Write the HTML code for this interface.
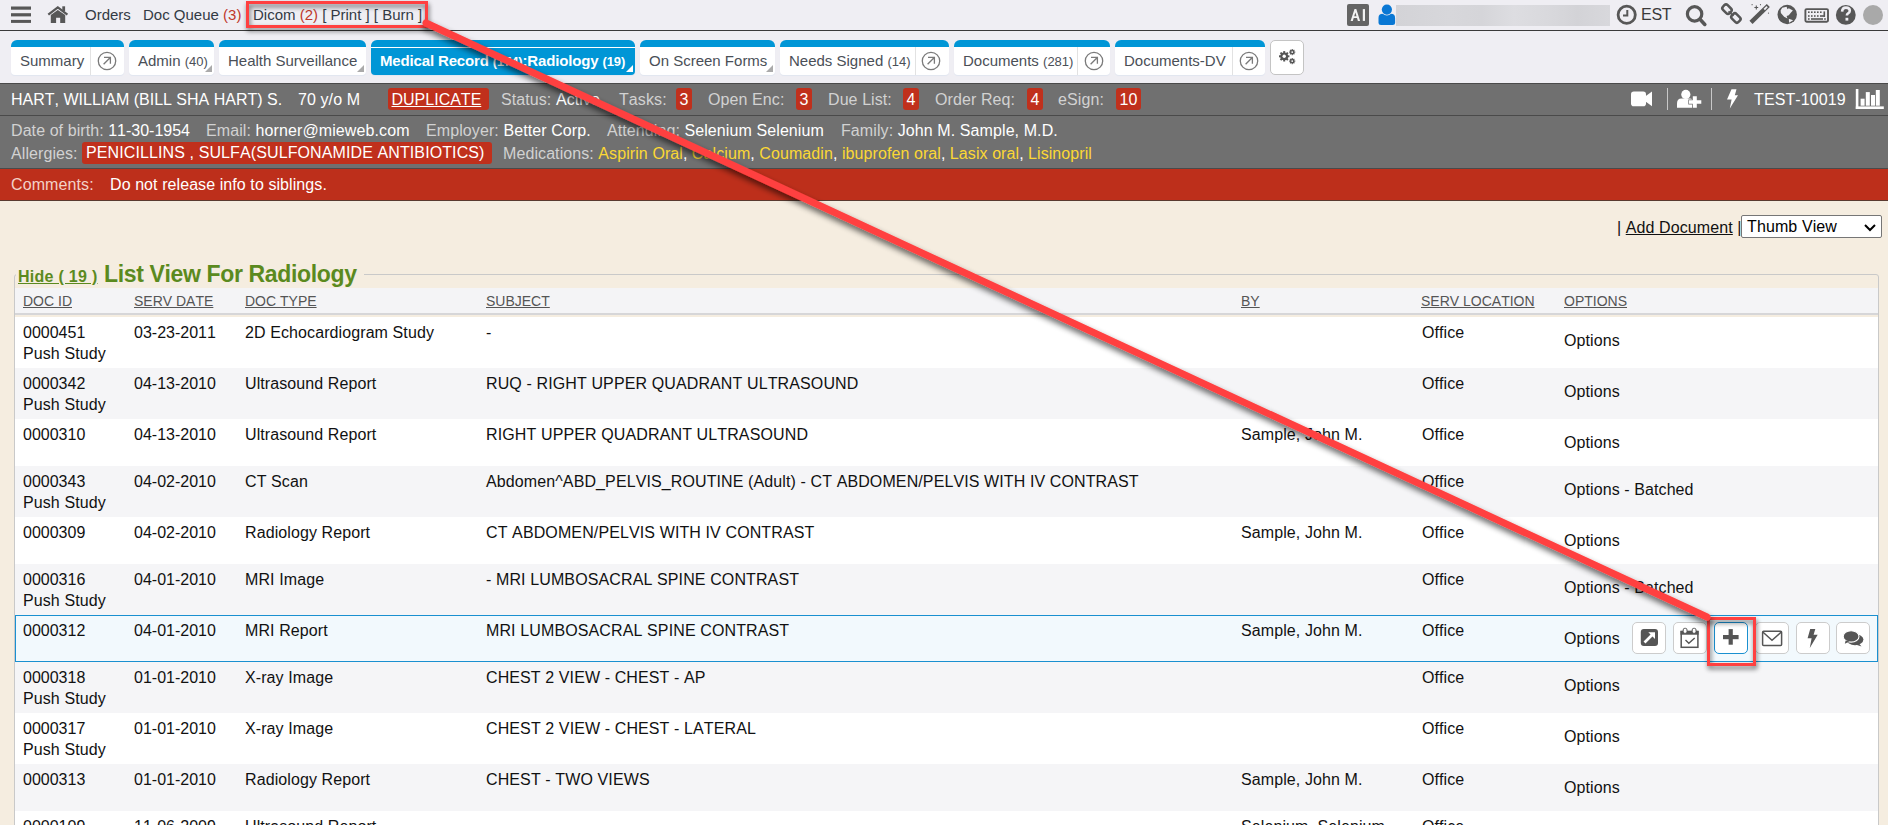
<!DOCTYPE html>
<html><head><meta charset="utf-8">
<style>
*{box-sizing:border-box;margin:0;padding:0}
html,body{width:1888px;height:825px;overflow:hidden;background:#f5ede0;font-family:"Liberation Sans",sans-serif;font-kerning:none}
.abs{position:absolute;white-space:nowrap}
#top{position:absolute;left:0;top:0;width:1888px;height:31px;background:#efeef3;border-bottom:1px solid #3a3a3a}
#tabs{position:absolute;left:0;top:31px;width:1888px;height:52px;background:#efeef3}
.t15{font-size:15px;color:#333a44}
.tab{position:absolute;top:40px;height:35px;background:#fff;border-radius:6px 6px 4px 4px;border-top:7px solid #0096d6;box-shadow:0 1px 1px rgba(0,120,200,0.06)}
.tab.act{background:#0096d6}
.tab .lbl{position:absolute;left:9px;top:5px;font-size:15px;color:#4a4f57;white-space:nowrap}
.tab.act .lbl{color:#fff;font-weight:bold}
.tab .cnt{font-size:13px}
.tab .div{position:absolute;top:0;bottom:0;width:1px;background:#e2e2e2}
.tab .circ{position:absolute;top:5px;width:18px;height:18px;border:1.5px solid #777;border-radius:50%}
.tri{position:absolute;right:2px;bottom:3px;width:0;height:0;border-left:7px solid transparent;border-bottom:7px solid #aaa}
#pbar{position:absolute;left:0;top:83px;width:1888px;height:33px;background:#707070;border-top:1px solid #4a4a4a;border-bottom:1px solid #4a4a4a}
#info{position:absolute;left:0;top:116px;width:1888px;height:53px;background:#707070;border-bottom:1px solid #4a4a4a}
#cmt{position:absolute;left:0;top:169px;width:1888px;height:32px;background:#bd2f1b;border-bottom:1px solid #5a3a30}
.w16{font-size:16px;color:#fff}
.lab{color:#d2d2d2}
.badge{position:absolute;background:#c0301c;border-radius:3px;color:#fff;font-size:16px;text-align:center}
.med{color:#fcd834}

.cell{position:absolute;font-size:16px;line-height:21px;color:#111;white-space:nowrap}
.row{position:absolute;left:15px;width:1863px}
.row.hl{background:#f2f9fd;border-top:1px solid #1a90d0;border-bottom:1px solid #1a90d0;border-left:1px solid #1a90d0;border-right:1px solid #1a90d0;left:15px;width:1863px}
.hd{position:absolute;top:293px;font-size:14px;color:#555;text-decoration:underline;white-space:nowrap}
.btn{position:absolute;top:622px;width:34px;height:32px;background:#fff;border:1px solid #ccc;border-radius:5px}
</style></head><body>
<div id="top"></div>
<div id="tabs"></div>

<!-- top bar -->
<svg class="abs" style="left:11px;top:6px" width="20" height="17" viewBox="0 0 20 17"><rect x="0" y="0.5" width="20" height="3.2" fill="#575757"></rect><rect x="0" y="7.2" width="20" height="3.2" fill="#575757"></rect><rect x="0" y="13.9" width="20" height="3" fill="#575757"></rect></svg>
<svg class="abs" style="left:46px;top:5px" width="24" height="20" viewBox="46 5 24 20"><path d="M48.3 14.6 L57.8 7.4 L67.4 14.6" fill="none" stroke="#575757" stroke-width="2.3"></path><rect x="62.3" y="6.3" width="2.8" height="4.8" fill="#575757"></rect><path d="M50.8 15 L57.8 9.9 L65.2 15 L65.2 23 L60.2 23 L60.2 17.8 L56.1 17.8 L56.1 23 L50.8 23 Z" fill="#575757"></path></svg>
<div class="abs t15" style="left:85px;top:6px">Orders</div>
<div class="abs t15" style="left:143px;top:6px">Doc Queue <span style="color:#c0392b">(3)</span></div>
<div class="abs t15" style="left:253px;top:6px">Dicom <span style="color:#c0392b">(2)</span> [ Print ] [ Burn ]</div>

<!-- right top icons -->
<div class="abs" style="left:1347px;top:4px;width:22px;height:22px;background:#646464;border-radius:2px"><svg style="position:absolute;left:0;top:0" width="22" height="22" viewBox="1347 4 22 22"><path d="M1350.6 20.9 L1354.5 9.1 L1356.3 9.1 L1360.1 20.9 L1357.9 20.9 L1357 18 L1353.7 18 L1352.8 20.9 Z M1354.2 16.2 L1356.5 16.2 L1355.4 12.4 Z" fill="#f2f2f2"></path><rect x="1362.8" y="9.1" width="2.2" height="11.8" fill="#f2f2f2"></rect></svg></div>
<svg class="abs" style="left:1376px;top:2px" width="22" height="26" viewBox="1376 2 22 26"><path d="M1378.5 22.4 L1378.5 18 Q1378.5 13.8 1382.7 13.8 L1390.9 13.8 Q1395.1 13.8 1395.1 18 L1395.1 22.4 Q1395.1 24.9 1392.6 24.9 L1381 24.9 Q1378.5 24.9 1378.5 22.4 Z" fill="#0a78d4"></path><circle cx="1386.9" cy="9.6" r="5.8" fill="#efeef3"></circle><circle cx="1386.9" cy="9.6" r="5.1" fill="#0a78d4"></circle></svg>
<div class="abs" style="left:1396px;top:5px;width:214px;height:21px;background:linear-gradient(90deg,#d3d3d7 0%,#d7d7db 25%,#d5d5d9 40%,#dddde1 55%,#d9d9dd 70%,#d3d3d7 85%,#d8d8dc 100%)"></div>
<svg class="abs" style="left:1612px;top:0px" width="28" height="30" viewBox="1612 0 28 30"><circle cx="1626.7" cy="14.8" r="8.6" fill="none" stroke="#575757" stroke-width="2.8"></circle><path d="M1627.3 10 L1627.3 15.4 L1623 15.4" fill="none" stroke="#575757" stroke-width="2"></path></svg>
<div class="abs t15" style="left:1641px;top:6px;color:#3a3a3a;font-size:16px"><span style="letter-spacing:-0.259px">EST</span></div>
<svg class="abs" style="left:1680px;top:0px" width="30" height="30" viewBox="1680 0 30 30"><circle cx="1694.6" cy="13.9" r="7.2" fill="none" stroke="#575757" stroke-width="3.2"></circle><path d="M1700.2 19.6 L1704.8 24.4" stroke="#575757" stroke-width="3.6" stroke-linecap="round"></path></svg>
<svg class="abs" style="left:1715px;top:0px" width="30" height="30" viewBox="1715 0 30 30"><rect x="1722.3" y="5.9" width="9.4" height="6.6" rx="2.4" transform="rotate(45 1727 9.2)" fill="none" stroke="#575757" stroke-width="2.5"></rect><rect x="1731.2" y="14.7" width="9.4" height="6.6" rx="2.4" transform="rotate(45 1735.9 18)" fill="none" stroke="#575757" stroke-width="2.5"></rect><path d="M1728.5 11.4 L1733.5 15.8" stroke="#575757" stroke-width="1.6"></path></svg>
<svg class="abs" style="left:1745px;top:0px" width="30" height="30" viewBox="1745 0 30 30"><path d="M1751 22.4 L1768.3 5.5" stroke="#575757" stroke-width="4.4"></path><path d="M1764.3 9.5 L1767.1 6.7" stroke="#efeef3" stroke-width="1.8"></path><path d="M1756.3 5.6 L1756.3 9.4 M1754.4 7.5 L1758.2 7.5" stroke="#575757" stroke-width="1.1"></path><circle cx="1752.1" cy="4.7" r="0.6" fill="#575757"></circle><circle cx="1760.5" cy="4.7" r="0.6" fill="#575757"></circle><circle cx="1768.5" cy="13.1" r="0.6" fill="#575757"></circle></svg>
<svg class="abs" style="left:1775px;top:0px" width="25" height="30" viewBox="1775 0 25 30"><circle cx="1787.2" cy="14.5" r="9.7" fill="#575757"></circle><path d="M1780.6 10.5 L1782.2 7.7 L1786.6 6.7 L1787.5 9.2 L1788.8 8.3 L1792.9 10.5 L1791 12.4 L1788.8 15.2 L1786.6 15.9 L1787.5 18.4 L1784.1 16.8 L1780.9 13 Z" fill="#efeef3"></path><path d="M1788.8 18.7 L1793.2 20.3 L1789.1 22.8 Z" fill="#efeef3"></path></svg>
<svg class="abs" style="left:1802px;top:0px" width="30" height="30" viewBox="1802 0 30 30"><rect x="1805.4" y="9.1" width="22.6" height="12.7" rx="1.2" fill="none" stroke="#575757" stroke-width="1.9"></rect><g fill="#575757"><rect x="1808" y="11.4" width="1.6" height="1.6"></rect><rect x="1811" y="11.4" width="1.6" height="1.6"></rect><rect x="1814" y="11.4" width="1.6" height="1.6"></rect><rect x="1817" y="11.4" width="1.6" height="1.6"></rect><rect x="1820" y="11.4" width="1.6" height="1.6"></rect><rect x="1823.5" y="11.4" width="1.6" height="5.5"></rect><rect x="1808" y="15.2" width="1.6" height="1.6"></rect><rect x="1811" y="15.2" width="1.6" height="1.6"></rect><rect x="1814" y="15.2" width="1.6" height="1.6"></rect><rect x="1817" y="15.2" width="1.6" height="1.6"></rect><rect x="1820" y="15.2" width="5" height="1.6"></rect><rect x="1808" y="18.2" width="1.6" height="1.6"></rect><rect x="1811" y="18.2" width="12" height="1.6"></rect><rect x="1824.2" y="18.2" width="1.6" height="1.6"></rect></g></svg>
<svg class="abs" style="left:1835px;top:0px" width="22" height="30" viewBox="1835 0 22 30"><circle cx="1845.8" cy="14.9" r="9.9" fill="#575757"></circle><path d="M1842.1 11.6 Q1842.3 7.6 1846 7.6 Q1849.8 7.6 1849.8 10.8 Q1849.8 12.6 1847.8 13.6 Q1846.9 14.1 1846.9 15.6" fill="none" stroke="#efeef3" stroke-width="2.6"></path><rect x="1845.5" y="17.8" width="2.8" height="2.8" fill="#efeef3"></rect></svg>
<div class="abs" style="left:1863px;top:5px;width:20px;height:20px;border-radius:50%;background:#a9a9a9"></div>

<!-- tabs -->
<div class="tab" style="left:11px;width:113px"><div class="lbl">Summary</div><div class="div" style="left:79px"></div></div>
<div class="tab" style="left:129px;width:85px"><div class="lbl">Admin <span class="cnt">(40)</span></div><div class="tri"></div></div>
<div class="tab" style="left:219px;width:147px"><div class="lbl">Health Surveillance</div><div class="tri"></div></div>
<div class="tab act" style="left:371px;width:264px"><div style="position:absolute;left:0;right:0;top:0;height:1px;background:#fff"></div><div class="lbl"><span style="letter-spacing:-0.153px">Medical Record </span><span class="cnt"><span style="letter-spacing:-0.121px">(174)</span></span><span style="letter-spacing:-0.148px">:Radiology </span><span class="cnt"><span style="letter-spacing:-0.116px">(19)</span></span></div><div class="tri" style="border-bottom-color:#fff"></div></div>
<div class="tab" style="left:640px;width:135px"><div class="lbl">On Screen Forms</div><div class="tri"></div></div>
<div class="tab" style="left:780px;width:169px"><div class="lbl">Needs Signed <span class="cnt">(14)</span></div><div class="div" style="left:135px"></div></div>
<div class="tab" style="left:954px;width:156px"><div class="lbl">Documents <span class="cnt">(281)</span></div><div class="div" style="left:123px"></div></div>
<div class="tab" style="left:1115px;width:150px"><div class="lbl">Documents-DV</div><div class="div" style="left:117px"></div></div>
<div class="abs" style="left:1270px;top:40px;width:34px;height:35px;background:#fff;border:1px solid #c4c4c4;border-radius:5px"></div>

<!-- patient bar -->
<div id="pbar"></div>
<div id="info"></div>
<div id="cmt"></div>
<div class="abs w16" style="left:11px;top:91px">HART, WILLIAM (BILL SHA HART) S.</div>
<div class="abs w16" style="left:298px;top:91px"><span style="letter-spacing:0.092px">70 y/o M</span></div>
<div class="badge" style="left:388px;top:88px;width:101px;height:22px;line-height:23px;text-decoration:underline;text-align:left;padding-left:3.5px">DUPLICATE</div>
<div class="abs w16" style="left:501px;top:91px"><span class="lab"><span style="letter-spacing:0.085px">Status:</span></span><span style="letter-spacing:0.082px"> Active</span></div>
<div class="abs w16 lab" style="left:619px;top:91px"><span style="letter-spacing:0.094px">Tasks:</span></div>
<div class="badge" style="left:676px;top:88px;width:16px;height:22px;line-height:23px">3</div>
<div class="abs w16 lab" style="left:708px;top:91px"><span style="letter-spacing:0.101px">Open Enc:</span></div>
<div class="badge" style="left:796px;top:88px;width:16px;height:22px;line-height:23px">3</div>
<div class="abs w16 lab" style="left:828px;top:91px"><span style="letter-spacing:0.084px">Due List:</span></div>
<div class="badge" style="left:903px;top:88px;width:16px;height:22px;line-height:23px">4</div>
<div class="abs w16 lab" style="left:935px;top:91px"><span style="letter-spacing:0.095px">Order Req:</span></div>
<div class="badge" style="left:1027px;top:88px;width:16px;height:22px;line-height:23px">4</div>
<div class="abs w16 lab" style="left:1058px;top:91px"><span style="letter-spacing:0.091px">eSign:</span></div>
<div class="badge" style="left:1116px;top:88px;width:25px;height:22px;line-height:23px">10</div>
<div class="abs w16" style="left:1754px;top:91px"><span style="letter-spacing:0.109px">TEST-10019</span></div>

<div class="abs w16" style="left:11px;top:122px"><span class="lab"><span style="letter-spacing:0.079px">Date of birth:</span></span> 11-30-1954</div>
<div class="abs w16" style="left:206px;top:122px"><span class="lab"><span style="letter-spacing:0.089px">Email:</span></span><span style="letter-spacing:0.104px"> horner@mieweb.com</span></div>
<div class="abs w16" style="left:426px;top:122px"><span class="lab"><span style="letter-spacing:0.096px">Employer:</span></span><span style="letter-spacing:0.084px"> Better Corp.</span></div>
<div class="abs w16" style="left:607px;top:122px"><span class="lab"><span style="letter-spacing:0.086px">Attending:</span></span><span style="letter-spacing:0.095px"> Selenium Selenium</span></div>
<div class="abs w16" style="left:841px;top:122px"><span class="lab"><span style="letter-spacing:0.088px">Family:</span></span><span style="letter-spacing:0.093px"> John M. Sample, M.D.</span></div>
<div class="abs w16 lab" style="left:11px;top:145px"><span style="letter-spacing:0.079px">Allergies:</span></div>
<div class="badge" style="left:82px;top:142px;width:410px;height:22px;line-height:22px;text-align:left;padding-left:4px"><span style="letter-spacing:0.107px">PENICILLINS , SULFA(SULFONAMIDE ANTIBIOTICS)</span></div>
<div class="abs w16" style="left:503px;top:145px"><span class="lab"><span style="letter-spacing:0.090px">Medications:</span></span> <span class="med"><span style="letter-spacing:0.084px">Aspirin Oral</span></span>, <span class="med"><span style="letter-spacing:0.099px">Calcium</span></span>, <span class="med"><span style="letter-spacing:0.109px">Coumadin</span></span>, <span class="med"><span style="letter-spacing:0.084px">ibuprofen oral</span></span>, <span class="med"><span style="letter-spacing:0.082px">Lasix oral</span></span>, <span class="med"><span style="letter-spacing:0.076px">Lisinopril</span></span></div>
<div class="abs w16" style="left:11px;top:176px"><span style="color:#f3d2c8"><span style="letter-spacing:0.109px">Comments:</span></span></div>
<div class="abs w16" style="left:110px;top:176px"><span style="letter-spacing:0.080px">Do not release info to siblings.</span></div>


<!-- content -->
<div class="abs" style="left:1617px;top:219px;font-size:16px;color:#111"><span style="letter-spacing:0.052px">| </span><span style="text-decoration:underline"><span style="letter-spacing:0.106px">Add Document</span></span><span style="letter-spacing:0.052px"> |</span></div>
<div class="abs" style="left:1741px;top:215px;width:141px;height:23px;background:#fff;border:1px solid #767676;border-radius:2px;font-size:16px;color:#000;padding-left:5px;line-height:22px"><span style="letter-spacing:0.107px">Thumb View</span><svg style="position:absolute;right:5px;top:8px" width="12" height="8" viewBox="0 0 12 8"><path d="M1 1 L6 6 L11 1" fill="none" stroke="#000" stroke-width="2"></path></svg></div>
<div class="abs" style="left:14px;top:274px;width:1865px;height:560px;border:1px solid #c9c9c9;border-radius:3px"></div>
<div class="abs" style="left:16px;top:262px;width:348px;height:24px;background:#f5ede0"></div>
<div class="abs" style="left:18px;top:268px;font-size:16px;font-weight:bold;color:#5b8a1e;text-decoration:underline"><span style="letter-spacing:0.278px">Hide ( 19 )</span></div>
<div class="abs" style="left:104px;top:261px;font-size:23px;font-weight:bold;color:#5b8a1e"><span style="letter-spacing:-0.351px">List View For Radiology</span></div>
<div class="abs" style="left:15px;top:288px;width:1863px;height:27px;background:#f4f4f6;border-bottom:2px solid #d6d6d8"></div>
<div class="hd" style="left:23px">DOC ID</div>
<div class="hd" style="left:134px">SERV DATE</div>
<div class="hd" style="left:245px">DOC TYPE</div>
<div class="hd" style="left:486px">SUBJECT</div>
<div class="hd" style="left:1241px">BY</div>
<div class="hd" style="left:1421px">SERV LOCATION</div>
<div class="hd" style="left:1564px">OPTIONS</div>
<div class="row" style="top:317px;height:51px;background:#fff"></div>
<div class="cell" style="left:23px;top:322px">0000451<br><span style="letter-spacing:0.098px">Push Study</span></div>
<div class="cell" style="left:134px;top:322px">03-23-2011</div>
<div class="cell" style="left:245px;top:322px"><span style="letter-spacing:0.097px">2D Echocardiogram Study</span></div>
<div class="cell" style="left:486px;top:322px">-</div>
<div class="cell" style="left:1422px;top:322px"><span style="letter-spacing:0.084px">Office</span></div>
<div class="cell" style="left:1564px;top:329.5px"><span style="letter-spacing:0.095px">Options</span></div>
<div class="row" style="top:368px;height:51px;background:#f5f5f7"></div>
<div class="cell" style="left:23px;top:373px">0000342<br><span style="letter-spacing:0.098px">Push Study</span></div>
<div class="cell" style="left:134px;top:373px">04-13-2010</div>
<div class="cell" style="left:245px;top:373px"><span style="letter-spacing:0.092px">Ultrasound Report</span></div>
<div class="cell" style="left:486px;top:373px"><span style="letter-spacing:0.119px">RUQ - RIGHT UPPER QUADRANT ULTRASOUND</span></div>
<div class="cell" style="left:1422px;top:373px"><span style="letter-spacing:0.084px">Office</span></div>
<div class="cell" style="left:1564px;top:380.5px"><span style="letter-spacing:0.095px">Options</span></div>
<div class="row" style="top:419px;height:47px;background:#fff"></div>
<div class="cell" style="left:23px;top:424px">0000310</div>
<div class="cell" style="left:134px;top:424px">04-13-2010</div>
<div class="cell" style="left:245px;top:424px"><span style="letter-spacing:0.092px">Ultrasound Report</span></div>
<div class="cell" style="left:486px;top:424px"><span style="letter-spacing:0.123px">RIGHT UPPER QUADRANT ULTRASOUND</span></div>
<div class="cell" style="left:1241px;top:424px"><span style="letter-spacing:0.096px">Sample, John M.</span></div>
<div class="cell" style="left:1422px;top:424px"><span style="letter-spacing:0.084px">Office</span></div>
<div class="cell" style="left:1564px;top:431.5px"><span style="letter-spacing:0.095px">Options</span></div>
<div class="row" style="top:466px;height:51px;background:#f5f5f7"></div>
<div class="cell" style="left:23px;top:471px">0000343<br><span style="letter-spacing:0.098px">Push Study</span></div>
<div class="cell" style="left:134px;top:471px">04-02-2010</div>
<div class="cell" style="left:245px;top:471px"><span style="letter-spacing:0.107px">CT Scan</span></div>
<div class="cell" style="left:486px;top:471px"><span style="letter-spacing:0.109px">Abdomen^ABD_PELVIS_ROUTINE (Adult) - CT ABDOMEN/PELVIS WITH IV CONTRAST</span></div>
<div class="cell" style="left:1422px;top:471px"><span style="letter-spacing:0.084px">Office</span></div>
<div class="cell" style="left:1564px;top:478.5px"><span style="letter-spacing:0.090px">Options - Batched</span></div>
<div class="row" style="top:517px;height:47px;background:#fff"></div>
<div class="cell" style="left:23px;top:522px">0000309</div>
<div class="cell" style="left:134px;top:522px">04-02-2010</div>
<div class="cell" style="left:245px;top:522px"><span style="letter-spacing:0.093px">Radiology Report</span></div>
<div class="cell" style="left:486px;top:522px"><span style="letter-spacing:0.115px">CT ABDOMEN/PELVIS WITH IV CONTRAST</span></div>
<div class="cell" style="left:1241px;top:522px"><span style="letter-spacing:0.096px">Sample, John M.</span></div>
<div class="cell" style="left:1422px;top:522px"><span style="letter-spacing:0.084px">Office</span></div>
<div class="cell" style="left:1564px;top:529.5px"><span style="letter-spacing:0.095px">Options</span></div>
<div class="row" style="top:564px;height:51px;background:#f5f5f7"></div>
<div class="cell" style="left:23px;top:569px">0000316<br><span style="letter-spacing:0.098px">Push Study</span></div>
<div class="cell" style="left:134px;top:569px">04-01-2010</div>
<div class="cell" style="left:245px;top:569px"><span style="letter-spacing:0.104px">MRI Image</span></div>
<div class="cell" style="left:486px;top:569px"><span style="letter-spacing:0.116px">- MRI LUMBOSACRAL SPINE CONTRAST</span></div>
<div class="cell" style="left:1422px;top:569px"><span style="letter-spacing:0.084px">Office</span></div>
<div class="cell" style="left:1564px;top:576.5px"><span style="letter-spacing:0.090px">Options - Batched</span></div>
<div class="row hl" style="top:615px;height:47px"></div>
<div class="cell" style="left:23px;top:620px">0000312</div>
<div class="cell" style="left:134px;top:620px">04-01-2010</div>
<div class="cell" style="left:245px;top:620px"><span style="letter-spacing:0.098px">MRI Report</span></div>
<div class="cell" style="left:486px;top:620px"><span style="letter-spacing:0.120px">MRI LUMBOSACRAL SPINE CONTRAST</span></div>
<div class="cell" style="left:1241px;top:620px"><span style="letter-spacing:0.096px">Sample, John M.</span></div>
<div class="cell" style="left:1422px;top:620px"><span style="letter-spacing:0.084px">Office</span></div>
<div class="cell" style="left:1564px;top:627.5px"><span style="letter-spacing:0.095px">Options</span></div>
<div class="row" style="top:662px;height:51px;background:#f5f5f7"></div>
<div class="cell" style="left:23px;top:667px">0000318<br><span style="letter-spacing:0.098px">Push Study</span></div>
<div class="cell" style="left:134px;top:667px">01-01-2010</div>
<div class="cell" style="left:245px;top:667px"><span style="letter-spacing:0.095px">X-ray Image</span></div>
<div class="cell" style="left:486px;top:667px"><span style="letter-spacing:0.104px">CHEST 2 VIEW - CHEST - AP</span></div>
<div class="cell" style="left:1422px;top:667px"><span style="letter-spacing:0.084px">Office</span></div>
<div class="cell" style="left:1564px;top:674.5px"><span style="letter-spacing:0.095px">Options</span></div>
<div class="row" style="top:713px;height:51px;background:#fff"></div>
<div class="cell" style="left:23px;top:718px">0000317<br><span style="letter-spacing:0.098px">Push Study</span></div>
<div class="cell" style="left:134px;top:718px">01-01-2010</div>
<div class="cell" style="left:245px;top:718px"><span style="letter-spacing:0.095px">X-ray Image</span></div>
<div class="cell" style="left:486px;top:718px"><span style="letter-spacing:0.107px">CHEST 2 VIEW - CHEST - LATERAL</span></div>
<div class="cell" style="left:1422px;top:718px"><span style="letter-spacing:0.084px">Office</span></div>
<div class="cell" style="left:1564px;top:725.5px"><span style="letter-spacing:0.095px">Options</span></div>
<div class="row" style="top:764px;height:47px;background:#f5f5f7"></div>
<div class="cell" style="left:23px;top:769px">0000313</div>
<div class="cell" style="left:134px;top:769px">01-01-2010</div>
<div class="cell" style="left:245px;top:769px"><span style="letter-spacing:0.093px">Radiology Report</span></div>
<div class="cell" style="left:486px;top:769px"><span style="letter-spacing:0.114px">CHEST - TWO VIEWS</span></div>
<div class="cell" style="left:1241px;top:769px"><span style="letter-spacing:0.096px">Sample, John M.</span></div>
<div class="cell" style="left:1422px;top:769px"><span style="letter-spacing:0.084px">Office</span></div>
<div class="cell" style="left:1564px;top:776.5px"><span style="letter-spacing:0.095px">Options</span></div>
<div class="row" style="top:811px;height:51px;background:#fff"></div>
<div class="cell" style="left:23px;top:816px">0000109</div>
<div class="cell" style="left:134px;top:816px">11-06-2009</div>
<div class="cell" style="left:245px;top:816px"><span style="letter-spacing:0.092px">Ultrasound Report</span></div>
<div class="cell" style="left:1241px;top:816px"><span style="letter-spacing:0.095px">Selenium, Selenium</span></div>
<div class="cell" style="left:1422px;top:816px"><span style="letter-spacing:0.084px">Office</span></div>
<div class="cell" style="left:1564px;top:823.5px"><span style="letter-spacing:0.095px">Options</span></div>
<div class="btn" style="left:1632px"></div>
<div class="btn" style="left:1673px"></div>
<div class="btn" style="left:1714px;border-color:#1a90d0"></div>
<div class="btn" style="left:1755px"></div>
<div class="btn" style="left:1796px"></div>
<div class="btn" style="left:1836px"></div>
<svg class="abs" style="left:95.5px;top:49.5px" width="22" height="22" viewBox="0 0 22 22"><circle cx="11" cy="11" r="8.7" fill="none" stroke="#7a7a7a" stroke-width="1.3"></circle><path d="M7.6 14.3 L14.3 7.5 M8 7.3 L14.4 7.3 L14.4 13.8" fill="none" stroke="#7a7a7a" stroke-width="1.3"></path></svg>
<svg class="abs" style="left:920px;top:49.5px" width="22" height="22" viewBox="0 0 22 22"><circle cx="11" cy="11" r="8.7" fill="none" stroke="#7a7a7a" stroke-width="1.3"></circle><path d="M7.6 14.3 L14.3 7.5 M8 7.3 L14.4 7.3 L14.4 13.8" fill="none" stroke="#7a7a7a" stroke-width="1.3"></path></svg>
<svg class="abs" style="left:1082.5px;top:49.5px" width="22" height="22" viewBox="0 0 22 22"><circle cx="11" cy="11" r="8.7" fill="none" stroke="#7a7a7a" stroke-width="1.3"></circle><path d="M7.6 14.3 L14.3 7.5 M8 7.3 L14.4 7.3 L14.4 13.8" fill="none" stroke="#7a7a7a" stroke-width="1.3"></path></svg>
<svg class="abs" style="left:1237.5px;top:49.5px" width="22" height="22" viewBox="0 0 22 22"><circle cx="11" cy="11" r="8.7" fill="none" stroke="#7a7a7a" stroke-width="1.3"></circle><path d="M7.6 14.3 L14.3 7.5 M8 7.3 L14.4 7.3 L14.4 13.8" fill="none" stroke="#7a7a7a" stroke-width="1.3"></path></svg>
<svg class="abs" style="left:1270px;top:40px" width="34" height="35" viewBox="0 0 34 35" fill="#555"><g transform="translate(14.2,16.3)"><circle r="3.9"></circle><rect x="-1.0" y="-5.2" width="2.0" height="10.4" transform="rotate(0)"></rect><rect x="-1.0" y="-5.2" width="2.0" height="10.4" transform="rotate(45)"></rect><rect x="-1.0" y="-5.2" width="2.0" height="10.4" transform="rotate(90)"></rect><rect x="-1.0" y="-5.2" width="2.0" height="10.4" transform="rotate(135)"></rect><circle r="1.7" fill="#fff"></circle></g><g transform="translate(22.2,12.1)"><circle r="2.2"></circle><rect x="-0.6" y="-3.1" width="1.2" height="6.2" transform="rotate(0)"></rect><rect x="-0.6" y="-3.1" width="1.2" height="6.2" transform="rotate(45)"></rect><rect x="-0.6" y="-3.1" width="1.2" height="6.2" transform="rotate(90)"></rect><rect x="-0.6" y="-3.1" width="1.2" height="6.2" transform="rotate(135)"></rect><circle r="0.9" fill="#fff"></circle></g><g transform="translate(22.2,21.1)"><circle r="2.2"></circle><rect x="-0.6" y="-3.1" width="1.2" height="6.2" transform="rotate(0)"></rect><rect x="-0.6" y="-3.1" width="1.2" height="6.2" transform="rotate(45)"></rect><rect x="-0.6" y="-3.1" width="1.2" height="6.2" transform="rotate(90)"></rect><rect x="-0.6" y="-3.1" width="1.2" height="6.2" transform="rotate(135)"></rect><circle r="0.9" fill="#fff"></circle></g></svg>
<svg class="abs" style="left:1630px;top:91px" width="23" height="16" viewBox="0 0 23 16" fill="#fff"><rect x="1" y="0.6" width="15" height="14.6" rx="2.8"></rect><path d="M15.5 5.2 L22 0.6 L22 15.2 L15.5 10.6 Z"></path></svg>
<div class="abs" style="left:1667px;top:88px;width:1px;height:22px;background:#c8c8c8"></div>
<div class="abs" style="left:1711px;top:88px;width:1px;height:22px;background:#c8c8c8"></div>
<svg class="abs" style="left:1676px;top:89px" width="26" height="20" viewBox="0 0 26 20" fill="#fff"><circle cx="9.8" cy="5.4" r="4.6"></circle><path d="M1 18.8 L1 14.5 Q1 9.6 5.5 9.6 L14 9.6 Q15.5 9.6 16 10.4 L16 18.8 Z"></path><path d="M13 11.2 L16.8 11.2 L16.8 7.2 L20.8 7.2 L20.8 11.2 L25.3 11.2 L25.3 14.8 L20.8 14.8 L20.8 18.8 L16.8 18.8 L16.8 14.8 L13 14.8 Z" stroke="#707070" stroke-width="1.4" paint-order="stroke"></path></svg>
<svg class="abs" style="left:1726px;top:89px" width="13" height="20" viewBox="0 0 13 20" fill="#fff"><path d="M5.5 0.3 L10.5 0.3 L8.8 6.2 L12 6.2 L3.8 19.5 L5.6 10.5 L1 10.5 Z"></path></svg>
<svg class="abs" style="left:1855px;top:88px" width="30" height="22" viewBox="0 0 30 22" fill="#fff"><rect x="0.8" y="1" width="2.6" height="20"></rect><rect x="0.8" y="18.4" width="28" height="2.6"></rect><rect x="5.6" y="10.7" width="4" height="7"></rect><rect x="10.8" y="4.1" width="4" height="13.6"></rect><rect x="16" y="7" width="4" height="10.7"></rect><rect x="20.8" y="2" width="4" height="15.7"></rect></svg>
<svg class="abs" style="left:1640px;top:628px" width="19" height="19" viewBox="0 0 19 19"><rect x="0.8" y="1.1" width="17.2" height="17" rx="3" fill="#555"></rect><path d="M4.5 14.5 L12.5 6.5" stroke="#fff" stroke-width="2.6"></path><path d="M8.3 4.2 L15 4.2 L15 10.9 Z" fill="#fff"></path></svg>
<svg class="abs" style="left:1672px;top:620px" width="36" height="36" viewBox="1672 620 36 36"><rect x="1681.2" y="631.5" width="16.7" height="15.8" fill="none" stroke="#555" stroke-width="1.5"></rect><rect x="1680.5" y="630.9" width="18.1" height="3.8" fill="#555"></rect><rect x="1683.2" y="628.3" width="3.8" height="5" rx="1.6" fill="#fff" stroke="#555" stroke-width="1"></rect><rect x="1692.2" y="628.3" width="3.8" height="5" rx="1.6" fill="#fff" stroke="#555" stroke-width="1"></rect><path d="M1685.5 640.1 L1688.8 643.3 L1694.7 637.9" fill="none" stroke="#555" stroke-width="1.4"></path></svg>
<svg class="abs" style="left:1722px;top:628px" width="18" height="18" viewBox="0 0 18 18" fill="#555"><rect x="1" y="7" width="15.6" height="4.2"></rect><rect x="6.6" y="1.1" width="4.2" height="15.6"></rect></svg>
<svg class="abs" style="left:1761px;top:630px" width="22" height="17" viewBox="0 0 22 17"><rect x="1.6" y="1.2" width="19" height="14.2" rx="1" fill="none" stroke="#555" stroke-width="1.5"></rect><path d="M1.8 2 L11 10.3 L20.3 2" fill="none" stroke="#555" stroke-width="1.5"></path></svg>
<svg class="abs" style="left:1806px;top:628px" width="13" height="21" viewBox="0 0 13 21" fill="#555"><path d="M4.2 1 L9.3 1 L7.6 6.8 L11.7 6.8 L3.8 20 L5.6 10.2 L1.6 10.2 Z"></path></svg>
<svg class="abs" style="left:1835px;top:620px" width="37" height="36" viewBox="1835 620 37 36"><ellipse cx="1855" cy="639.6" rx="8.4" ry="5.6" fill="#555"></ellipse><path d="M1858.5 643 L1861.6 646.4 L1855.5 644.6 Z" fill="#555"></path><ellipse cx="1851.1" cy="636.4" rx="7.9" ry="5.7" fill="#555" stroke="#fff" stroke-width="1.1"></ellipse><path d="M1845.6 640.5 L1844.8 643.8 L1849.5 641.6 Z" fill="#555"></path></svg>
<svg class="abs" style="left:0;top:0" width="1888" height="825" viewBox="0 0 1888 825">
<defs><filter id="sh" x="-10%" y="-10%" width="120%" height="120%"><feGaussianBlur in="SourceAlpha" stdDeviation="3"></feGaussianBlur><feOffset dx="1" dy="3.5" result="b"></feOffset><feComponentTransfer><feFuncA type="linear" slope="0.65"></feFuncA></feComponentTransfer><feMerge><feMergeNode></feMergeNode><feMergeNode in="SourceGraphic"></feMergeNode></feMerge></filter>
<filter id="shb" x="-50%" y="-50%" width="200%" height="200%"><feGaussianBlur in="SourceAlpha" stdDeviation="2.5"></feGaussianBlur><feOffset dx="1" dy="3" result="b"></feOffset><feComponentTransfer><feFuncA type="linear" slope="0.6"></feFuncA></feComponentTransfer><feMerge><feMergeNode></feMergeNode><feMergeNode in="SourceGraphic"></feMergeNode></feMerge></filter></defs>
<g filter="url(#shb)"><rect x="247.5" y="2.5" width="179" height="24" fill="none" stroke="#ff4040" stroke-width="3"></rect></g>
<g filter="url(#shb)"><rect x="1708.5" y="618.5" width="46" height="46" fill="none" stroke="#ff4040" stroke-width="3"></rect></g>
<g filter="url(#sh)"><line x1="426" y1="23" x2="1707" y2="617" stroke="#ff4040" stroke-width="7" stroke-linecap="round"></line></g>
</svg>

</body></html>
